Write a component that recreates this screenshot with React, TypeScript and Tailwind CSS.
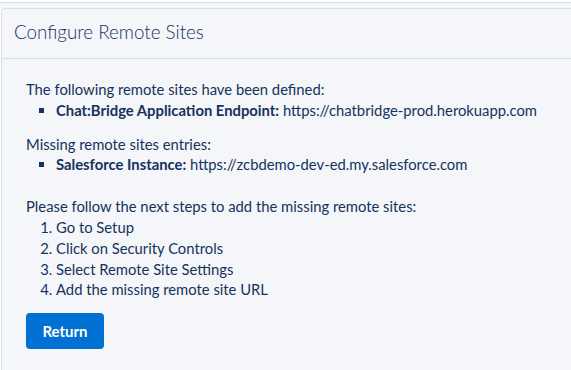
import React from "react";

export default function App() {
  return (
    <div
      className="w-[571px] h-[370px] overflow-hidden bg-white text-[#16325c]"
      style={{ fontFamily: "Lato, 'Noto Sans', sans-serif" }}
    >
      <div className="h-[2px] bg-white" />
      <div className="h-[1px] bg-[#d8dde6]" />
      <div className="h-[5px] bg-[#f4f6f9]" />
      <div className="ml-[1px] rounded-tl-[4px] border-l border-t border-[#d8dde6] bg-[#f4f6f9] h-[380px]">
        <div className="h-[50px] flex items-center pl-[12px] pb-[3px] border-b border-[#d8dde6]">
          <h1 className="text-[18.8px] font-light leading-none">Configure Remote Sites</h1>
        </div>
        <div className="pl-[24px] pt-[20px] text-[14.8px] leading-[20.8px]">
          <p>The following remote sites have been defined:</p>
          <ul className="list-[square] pl-[30px]">
            <li>
              <b className="font-bold">Chat:Bridge Application Endpoint:</b> https://chatbridge-prod.herokuapp.com
            </li>
          </ul>
          <p className="mt-[13px]">Missing remote sites entries:</p>
          <ul className="list-[square] pl-[30px]">
            <li>
              <b className="font-bold">Salesforce Instance:</b> https://zcbdemo-dev-ed.my.salesforce.com
            </li>
          </ul>
          <p className="mt-[21px]">Please follow the next steps to add the missing remote sites:</p>
          <ol className="list-decimal pl-[30px]">
            <li>Go to Setup</li>
            <li>Click on Security Controls</li>
            <li>Select Remote Site Settings</li>
            <li>Add the missing remote site URL</li>
          </ol>
          <button className="mt-[13px] w-[78px] h-[36px] rounded-[4px] bg-[#0070d2] text-white text-[15px] font-bold">
            Return
          </button>
        </div>
      </div>
    </div>
  );
}
